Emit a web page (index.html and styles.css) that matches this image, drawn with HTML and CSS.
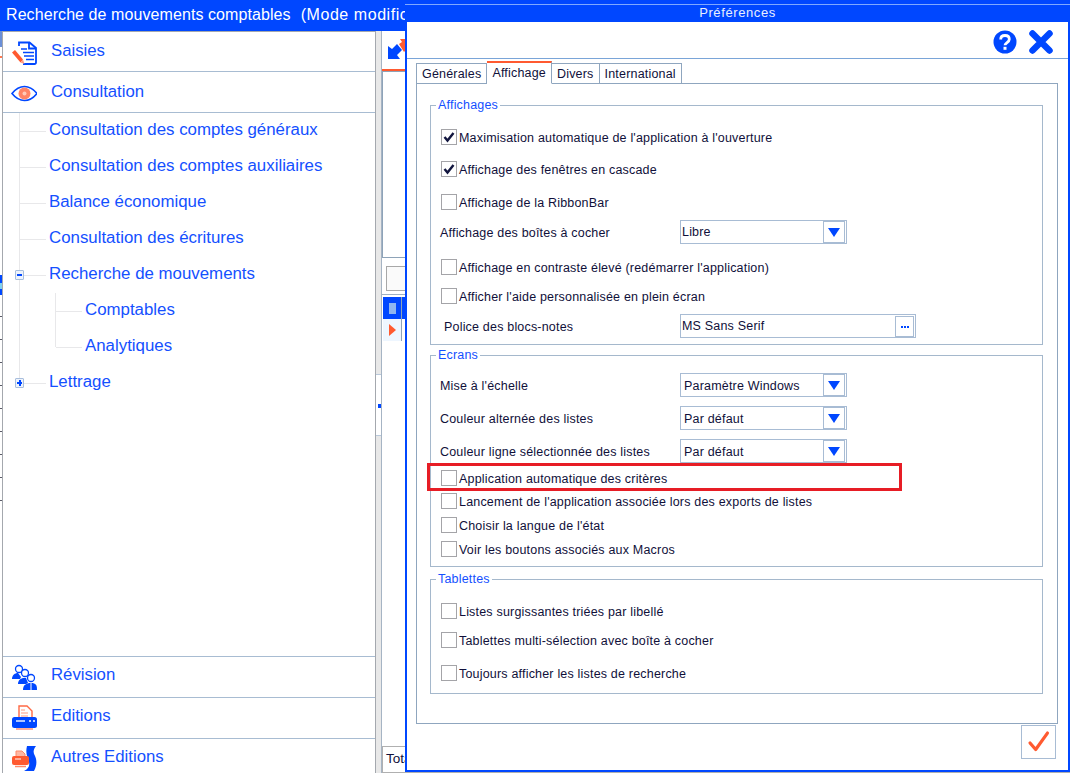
FILE: index.html
```html
<!DOCTYPE html>
<html lang="fr">
<head>
<meta charset="utf-8">
<title>Préférences</title>
<link rel="stylesheet" href="styles.css">
</head>
<body>
<div class="app">
  <header class="app-title">Recherche de mouvements comptables&nbsp; <span class="app-mode">(Mode modification)</span></header>
  <div class="app-main">
    <div class="edge"></div>
    <nav class="sidebar">
      <a class="item item-first">
        <svg class="item-icon" viewBox="0 0 26 26"><path d="M8 6V2.500h10.500l6.500 5.500v14.500a1.500 1.500 0 0 1-1.500 1.500H12" fill="none" stroke="#0047ff" stroke-width="1.800"/><path d="M18 2.500v6h7" fill="none" stroke="#0047ff" stroke-width="1.800"/><path d="M10 9h6M12 12.500h11M13 16h10M15 19.500h8" stroke="#0047ff" stroke-width="1.600"/><path d="M1 12.500l3-2.500 8 9.500-2.500 3z" fill="#ff5a30"/><path d="M9.500 22.500l2.500-3 1.500 4.500z" fill="#ff9a80"/></svg>
        <span class="item-text">Saisies</span>
      </a>
      <a class="item item-second">
        <svg class="item-icon" viewBox="0 0 26 26"><path d="M1 13.500C5 8.500 9 6.500 13.500 6.500S22 8.500 26 13.500C22 18.500 18 20.500 13.500 20.500S5 18.500 1 13.500z" fill="#fff" stroke="#0047ff" stroke-width="1.600"/><circle cx="13.500" cy="13.500" r="6" fill="#ff8466"/><circle cx="13.500" cy="13.500" r="2" fill="#ffc9b8"/></svg>
        <span class="item-text">Consultation</span>
      </a>
      <div class="tree-wrap">
        <ul class="tree">
          <li class="node"><div class="label">Consultation des comptes généraux</div></li>
          <li class="node"><div class="label">Consultation des comptes auxiliaires</div></li>
          <li class="node"><div class="label">Balance économique</div></li>
          <li class="node"><div class="label">Consultation des écritures</div></li>
          <li class="node">
            <div class="label"><span class="toggle"></span>Recherche de mouvements</div>
            <ul class="tree sub">
              <li class="node"><div class="label">Comptables</div></li>
              <li class="node"><div class="label">Analytiques</div></li>
            </ul>
          </li>
          <li class="node"><div class="label"><span class="toggle toggle-plus"></span>Lettrage</div></li>
        </ul>
      </div>
      <a class="item item-foot">
        <svg class="item-icon" viewBox="0 0 26 26"><circle cx="8" cy="5" r="3.500" fill="#fff" stroke="#0047ff" stroke-width="1.300"/><path d="M1 15c0-4 3-6 6-6l3 4-1 2z" fill="#0047ff"/><circle cx="14" cy="9" r="3.500" fill="#fff" stroke="#0047ff" stroke-width="1.300"/><path d="M7 20c0-4 3-6 6-6h2l2 5-2 1z" fill="#0047ff"/><circle cx="20" cy="14" r="3.500" fill="#fff" stroke="#0047ff" stroke-width="1.300"/><path d="M12 26c0-5 3-7 8-7s6 2 6 7z" fill="#0047ff"/><path d="M20 19v7" stroke="#fff"/></svg>
        <span class="item-text">Révision</span>
      </a>
      <a class="item item-foot">
        <svg class="item-icon" viewBox="0 0 26 26"><path d="M8 13V1h8l5 5v7" fill="#fff" stroke="#ff6a45" stroke-width="1.400"/><path d="M10 5h4M10 8h7M10 11h7" stroke="#ff9a80"/><rect x="1" y="12" width="25" height="11" rx="2.500" fill="#0047ff"/><path d="M5 16h9" stroke="#fff" stroke-width="1.400"/><path d="M18 16h2M22 16h2" stroke="#fff" stroke-width="1.600"/><path d="M5 24h17" stroke="#ff9a80" stroke-width="1.600"/></svg>
        <span class="item-text">Editions</span>
      </a>
      <a class="item item-foot item-last">
        <svg class="item-icon" viewBox="0 0 26 26"><path d="M16 0H25C22 4 22 7 24 10C26 14 26 20 23 25H13C17 23 19 20 18 16C17 12 14 8 16 0z" fill="#0047ff"/><path d="M5 10V5h6l3 3v2" fill="#ffb7a3" stroke="#ff8a6a"/><rect x="1" y="10" width="17" height="9" rx="2" fill="#ff5a30"/><path d="M4 13h6" stroke="#fff"/><path d="M4 20.500h11" stroke="#ff8a6a" stroke-width="1.500"/></svg>
        <span class="item-text">Autres Editions</span>
      </a>
    </nav>
    <div class="splitter"><div class="splitter-thumb"><span class="splitter-dot"></span></div></div>
    <section class="content">
      <div class="toolbar">
        <svg class="tool-icon" viewBox="0 0 26 22"><path d="M13 1H22V15L19 12 17 14 12 6 15 4z" fill="#ff5a30"/><path d="M1 8L5 11 10 6 15 12 10 17 13 21H1z" fill="#0047ff"/></svg>
      </div>
      <div class="accent"></div>
      <div class="content-box"></div>
      <div class="filter-bar"><div class="filter-box"></div></div>
      <div class="grid-view">
        <div class="grid-row grid-row-active"><span class="grid-head"><span class="grid-thumb"></span></span><span class="grid-cell"></span></div>
        <div class="grid-row"><span class="grid-head grid-head-light"><span class="grid-arrow"></span></span><span class="grid-cell grid-cell-light"></span></div>
      </div>
      <div class="total">Total</div>
    </section>
  </div>
</div>

<div class="dialog">
  <div class="dialog-title"><span class="dialog-title-text">Préférences</span></div>
  <div class="dialog-head">
    <svg class="head-icon" viewBox="0 0 24 24"><circle cx="12" cy="12" r="11.500" fill="#0047ff"/><path d="M7.700 9.500C7.700 7 9.500 5.500 12 5.500s4.300 1.500 4.300 3.800c0 3.200-4.300 3.200-4.300 6" fill="none" stroke="#fff" stroke-width="2.800"/><rect x="10.500" y="16.800" width="3" height="3" fill="#fff"/></svg>
    <svg class="head-icon" viewBox="0 0 24 24"><path d="M3.500 3.500L20.500 20.500M20.500 3.500L3.500 20.500" stroke="#0047ff" stroke-width="6.500" stroke-linecap="round"/></svg>
  </div>
  <div class="dialog-body">
    <div class="tabs">
      <span class="tab">Générales</span>
      <span class="tab tab-active">Affichage</span>
      <span class="tab">Divers</span>
      <span class="tab">International</span>
    </div>
    <div class="pane">
      <fieldset class="group group-a">
        <legend>Affichages</legend>
        <div class="row"><span class="check"><svg viewBox="0 0 14 14"><path d="M2.500 7l3 3.500 6-7.500" fill="none" stroke="#12163f" stroke-width="2.400"/></svg></span>Maximisation automatique de l'application à l'ouverture</div>
        <div class="row"><span class="check"><svg viewBox="0 0 14 14"><path d="M2.500 7l3 3.500 6-7.500" fill="none" stroke="#12163f" stroke-width="2.400"/></svg></span>Affichage des fenêtres en cascade</div>
        <div class="row"><span class="check"></span>Affichage de la RibbonBar</div>
        <div class="row"><span class="field-label">Affichage des boîtes à cocher</span><span class="combo"><span class="combo-value">Libre</span><span class="combo-btn"></span></span></div>
        <div class="row"><span class="check"></span>Affichage en contraste élevé (redémarrer l'application)</div>
        <div class="row"><span class="check"></span>Afficher l'aide personnalisée en plein écran</div>
        <div class="row"><span class="field-label field-label-indent">Police des blocs-notes</span><span class="combo combo-wide"><span class="combo-value">MS Sans Serif</span><span class="dots-btn"></span></span></div>
      </fieldset>
      <fieldset class="group group-b">
        <legend>Ecrans</legend>
        <div class="row"><span class="field-label">Mise à l'échelle</span><span class="combo"><span class="combo-value">Paramètre Windows</span><span class="combo-btn"></span></span></div>
        <div class="row"><span class="field-label">Couleur alternée des listes</span><span class="combo"><span class="combo-value">Par défaut</span><span class="combo-btn"></span></span></div>
        <div class="row"><span class="field-label">Couleur ligne sélectionnée des listes</span><span class="combo"><span class="combo-value">Par défaut</span><span class="combo-btn"></span></span></div>
        <div class="row"><span class="check"></span>Application automatique des critères</div>
        <div class="row"><span class="check"></span>Lancement de l'application associée lors des exports de listes</div>
        <div class="row"><span class="check"></span>Choisir la langue de l'état</div>
        <div class="row"><span class="check"></span>Voir les boutons associés aux Macros</div>
      </fieldset>
      <fieldset class="group group-c">
        <legend>Tablettes</legend>
        <div class="row"><span class="check"></span>Listes surgissantes triées par libellé</div>
        <div class="row"><span class="check"></span>Tablettes multi-sélection avec boîte à cocher</div>
        <div class="row"><span class="check"></span>Toujours afficher les listes de recherche</div>
      </fieldset>
    </div>
    <div class="dialog-foot">
      <span class="ok-btn"><svg viewBox="0 0 35 34"><path d="M8.500 18l6 7L27 7.500" fill="none" stroke="#ff5a30" stroke-width="3.400" stroke-linecap="round" stroke-linejoin="round"/></svg></span>
    </div>
  </div>
  <div class="annotation"></div>
</div>
</body>
</html>
```

FILE: styles.css
```css
* { box-sizing: border-box; }

html, body {
  margin: 0;
  padding: 0;
}

body {
  position: relative;
  width: 1070px;
  height: 773px;
  overflow: hidden;
  background: #fff;
  font-family: "Liberation Sans", Arial, sans-serif;
}

/* Background window */
.app {
  display: flex;
  flex-direction: column;
  height: 773px;
}

.app-title {
  height: 31px;
  flex: none;
  padding: 6px 0 0 6px;
  background: #0047ff;
  color: #fff;
  font-size: 16px;
  line-height: 18px;
  letter-spacing: 0.08px;
  white-space: nowrap;
  overflow: hidden;
}

.app-mode {
  margin-left: 1px;
  letter-spacing: 0.55px;
}

.app-main {
  display: flex;
  flex: 1;
  min-height: 0;
}

.edge {
  width: 3px;
  flex: none;
  border-right: 1px solid #a4a8ae;
  background:
    linear-gradient(#6a8fd8 0 16px, #fff 16px 25px, #ff7a50 25px 27px, #fff 27px 244px, #0047ff 244px 252px, #7fd0f0 252px 258px, #0047ff 258px 264px, transparent 264px 470px, #fff 470px),
    repeating-linear-gradient(#fff 0 9px, #5a5a66 9px 10px, #fff 10px 23px);
}

.sidebar {
  width: 373px;
  flex: none;
  display: flex;
  flex-direction: column;
  border-top: 1px solid #a4a8ae;
  border-right: 1px solid #a4a8ae;
  background: #fff;
}

.item {
  display: flex;
  align-items: flex-start;
  flex: none;
  height: 41px;
  padding: 5px 0 0 8px;
  color: #1450ff;
  font-size: 16.75px;
  line-height: 24px;
}

.item-first {
  height: 40px;
  padding-top: 6px;
  border-bottom: 1px solid #a8bcd2;
}

.item-second {
  padding-top: 6px;
  border-bottom: 1px solid #a8bcd2;
}

.item-foot {
  border-top: 1px solid #a8bcd2;
}

.item-last {
  height: 35px;
}

.item-icon {
  width: 26px;
  height: 26px;
  flex: none;
  margin: 2px 14px 0 0;
}

.item-text {
  margin-top: 1px;
}

.item-second .item-text {
  margin-top: 2px;
}

.tree-wrap {
  flex: 1;
  min-height: 0;
}

.tree {
  list-style: none;
  margin: 0 0 0 16px;
  padding: 0;
}

.tree.sub {
  margin-left: 6px;
}

.node {
  position: relative;
  padding-left: 30px;
}

.node::before {
  content: "";
  position: absolute;
  left: 0;
  top: 0;
  bottom: 0;
  width: 1px;
  background: #e8e8ea;
}

.node:last-child::before {
  bottom: auto;
  height: 18px;
}

.label {
  position: relative;
  height: 36px;
  padding-bottom: 2px;
  display: flex;
  align-items: center;
  color: #1450ff;
  font-size: 16.85px;
  white-space: nowrap;
}

.label::before {
  content: "";
  position: absolute;
  left: -29px;
  top: 18px;
  width: 26px;
  height: 1px;
  background: #e8e8ea;
}

.toggle {
  position: absolute;
  left: -34px;
  top: 13px;
  z-index: 1;
  width: 9px;
  height: 10px;
  border: 1px solid #a8bedd;
  border-radius: 1px;
  background: #eef3fb;
}

.toggle::before {
  content: "";
  position: absolute;
  left: 1px;
  top: 3px;
  width: 5px;
  height: 2px;
  background: #0047ff;
}

.toggle-plus::after {
  content: "";
  position: absolute;
  left: 2.5px;
  top: 1px;
  width: 2px;
  height: 6px;
  background: #0047ff;
}

.splitter {
  width: 6px;
  flex: none;
  padding-top: 343px;
  background: #e8e8e8;
  border-right: 1px solid #a6b4c4;
}

.splitter-thumb {
  position: relative;
  height: 62px;
  background: #fff;
  border-top: 1px solid #b8c8da;
  border-bottom: 1px solid #b8c8da;
}

.splitter-dot {
  position: absolute;
  right: 0;
  top: 29px;
  width: 3px;
  height: 4px;
  background: #0047ff;
}

.content {
  flex: 1;
  display: flex;
  flex-direction: column;
  min-width: 0;
  overflow: hidden;
  font-size: 13.5px;
  color: #10103a;
}

.toolbar {
  height: 38px;
  flex: none;
  padding: 7px 0 0 5px;
}

.tool-icon {
  display: block;
  width: 26px;
  height: 22px;
}

.accent {
  height: 2px;
  flex: none;
  background: #ff5a30;
}

.content-box {
  height: 187px;
  flex: none;
  border: 1px solid #8ea3b8;
  border-right: 0;
}

.filter-bar {
  height: 37px;
  flex: none;
  padding: 8px 0 0 4px;
  border-bottom: 1px solid #9fb0c2;
}

.filter-box {
  height: 25px;
  border: 1px solid #a8a8a8;
  border-right: 0;
  background: #fafafa;
}

.grid-view {
  flex: 1;
  padding: 2px 0 0 1px;
}

.grid-row {
  display: flex;
  height: 22px;
}

.grid-head {
  display: flex;
  align-items: center;
  justify-content: center;
  width: 18px;
  flex: none;
  background: #0047ff;
}

.grid-head-light {
  background: #eef6ff;
}

.grid-thumb {
  width: 7px;
  height: 11px;
  background: #8fb6f0;
}

.grid-arrow {
  width: 0;
  height: 0;
  border-left: 7px solid #ff5a30;
  border-top: 6px solid transparent;
  border-bottom: 6px solid transparent;
}

.grid-cell {
  flex: 1;
  background: #0047ff;
  border-left: 1px solid #8ea3b8;
}

.grid-cell-light {
  background: #fff;
}

.total {
  height: 27px;
  flex: none;
  padding: 4px 0 0 3px;
  border: 1px solid #b0b0b0;
  border-right: 0;
  line-height: 16px;
}

/* Dialog window */
.dialog {
  position: absolute;
  left: 405px;
  top: 0;
  width: 665px;
  height: 772px;
  display: flex;
  flex-direction: column;
  background: #fff;
  border: 2px solid #0047ff;
  border-top: 0;
  color: #10103a;
  font-size: 12.5px;
}

.dialog-title {
  height: 22px;
  flex: none;
  margin: 0 -2px;
  background: linear-gradient(#0047ff 0 4px, #7fa8ff 4px 5px, #0047ff 5px);
  color: #e8eeff;
  font-size: 13px;
  text-align: center;
  line-height: 26px;
}

.dialog-title-text {
  letter-spacing: 0.6px;
}

.dialog-head {
  display: flex;
  justify-content: flex-end;
  align-items: center;
  gap: 12px;
  height: 37px;
  flex: none;
  padding: 3px 15px 0 0;
  border-bottom: 1px solid #7aa5d8;
}

.head-icon {
  width: 24px;
  height: 24px;
}

.dialog-body {
  display: flex;
  flex-direction: column;
  flex: 1;
  min-height: 0;
  padding: 2px 10px 0 9px;
}

.tabs {
  display: flex;
  align-items: flex-end;
  height: 23px;
  flex: none;
  margin-bottom: -1px;
}

.tab {
  height: 21px;
  padding: 0 5px;
  border: 1px solid #8fa6bf;
  border-left: 0;
  letter-spacing: 0.19px;
  line-height: 20px;
  background: #fff;
}

.tab:first-child {
  border-left: 1px solid #8fa6bf;
}

.tab-active {
  position: relative;
  z-index: 1;
  height: 23px;
  border-top: 2px solid #ff5a30;
  border-bottom-color: #fff;
  line-height: 20px;
}

.pane {
  flex: 1;
  display: flex;
  flex-direction: column;
  padding: 14px 14px 0 13px;
  border: 1px solid #8fa6bf;
}

.group {
  display: grid;
  grid-template-columns: 1fr;
  margin: 0;
  padding: 13px 9px 0;
  flex: none;
  min-width: 0;
  border: 1px solid #a5b8cc;
}

.group legend {
  margin-left: -4px;
  padding: 0 2px;
  color: #1450ff;
  letter-spacing: 0.19px;
  line-height: 14px;
}

.group-a {
  height: 247px;
  grid-template-rows: 32px 33px 30px 35px 29px 30px 24px;
}

.group-a .combo {
  padding-left: 1px;
}

.group-b {
  height: 219px;
  margin-top: 3px;
  padding-top: 11px;
  grid-template-rows: 33px 33px 27px 23px 24px 24px 24px;
}

.group-b .combo-value {
  margin-top: 2px;
}

.group-c {
  height: 122px;
  margin-top: 5px;
  grid-template-rows: 29px 33px 24px;
}

.row {
  display: flex;
  align-items: flex-start;
  align-self: start;
  height: 24px;
  letter-spacing: 0.19px;
  line-height: 26px;
  white-space: nowrap;
}

.check {
  display: flex;
  align-items: center;
  justify-content: center;
  align-self: center;
  width: 16px;
  height: 16px;
  flex: none;
  margin: 0 2px 0 1px;
  border: 1px solid #a4a4a8;
  background: #fff;
}

.check svg {
  width: 14px;
  height: 14px;
}

.field-label {
  width: 240px;
  flex: none;
}

.field-label-indent {
  width: 236px;
  margin-left: 4px;
}

.combo {
  display: flex;
  align-items: center;
  align-self: center;
  justify-content: space-between;
  width: 167px;
  height: 24px;
  flex: none;
  padding: 0 1px 0 3px;
  border: 1px solid #a8bcd4;
  background: #fff;
  line-height: normal;
}

.combo-wide {
  width: 236px;
}

.combo-btn {
  position: relative;
  width: 22px;
  height: 22px;
  flex: none;
  border: 1px solid #a8bcd4;
  background: #fff;
}

.combo-btn::before {
  content: "";
  position: absolute;
  left: 4px;
  top: 6px;
  width: 0;
  height: 0;
  border-left: 6px solid transparent;
  border-right: 6px solid transparent;
  border-top: 9px solid #0047ff;
}

.dots-btn {
  position: relative;
  width: 19px;
  height: 21px;
  flex: none;
  border: 1px solid #a8bcd4;
}

.dots-btn::before {
  content: "";
  position: absolute;
  left: 8px;
  top: 9px;
  width: 2px;
  height: 2px;
  background: #0047ff;
  box-shadow: -3px 0 #0047ff, 3px 0 #0047ff;
}

.dialog-foot {
  display: flex;
  justify-content: flex-end;
  height: 46px;
  flex: none;
  padding: 1px 2px 0 0;
}

.ok-btn {
  width: 35px;
  height: 34px;
  border: 1px solid #a8bcd4;
  background: #fff;
}

.ok-btn svg {
  display: block;
  width: 33px;
  height: 32px;
}

.annotation {
  position: absolute;
  left: 20px;
  top: 463px;
  width: 475px;
  height: 28px;
  border: 3px solid #e71d25;
}
```
